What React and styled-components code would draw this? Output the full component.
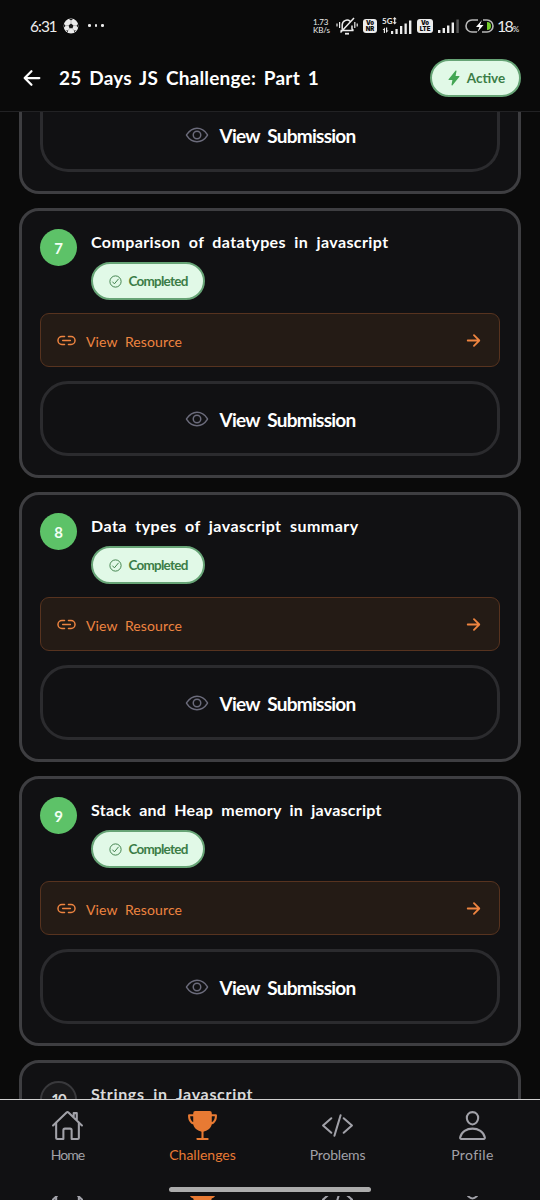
import React from "react";
import styled, { createGlobalStyle, css } from "styled-components";
import {
  IoArrowBack,
  IoArrowForward,
  IoCheckmarkCircleOutline,
  IoCodeSlashOutline,
  IoEyeOutline,
  IoFlash,
  IoHomeOutline,
  IoLinkOutline,
  IoPersonOutline,
  IoTrophy,
} from "react-icons/io5";

const GlobalStyle = createGlobalStyle`
  * {
    box-sizing: border-box;
  }

  body {
    margin: 0;
    background: #0a0a0a;
    color: #ffffff;
    font-family: Lato, "Open Sans", sans-serif;
    overflow: hidden;
  }

  svg {
    display: block;
    flex-shrink: 0;
  }
`;

const Screen = styled.div`
  width: 540px;
  height: 1200px;
  display: flex;
  flex-direction: column;
  background: #0a0a0a;
  overflow: hidden;
`;

const StatusBar = styled.div`
  height: 50px;
  flex-shrink: 0;
  display: flex;
  align-items: center;
  justify-content: space-between;
  padding: 1px 26px 0 30px;
  color: #ececec;
`;

const StatusLeft = styled.div`
  display: flex;
  align-items: center;
`;

const Clock = styled.span`
  font-size: 15.5px;
  letter-spacing: -1.5px;
  width: 33px;
  white-space: nowrap;

  b {
    font-weight: 400;
    margin: 0 0.7px 0 0.5px;
  }
`;

const Dots = styled.div`
  display: flex;
  gap: 4px;
  margin-left: 9px;

  i {
    width: 2.6px;
    height: 2.6px;
    border-radius: 50%;
    background: #ececec;
  }
`;

const StatusRight = styled.div`
  display: flex;
  align-items: center;
  gap: 5px;
`;

const Speed = styled.div`
  width: 18px;
  font-size: 8px;
  line-height: 8px;
  letter-spacing: -0.1px;
  white-space: nowrap;
`;

const VoBox = styled.div`
  width: ${(props) => props.$width}px;
  height: 14px;
  border-radius: 3px;
  background: #ececec;
  color: #0a0a0a;
  font-family: Inter, sans-serif;
  font-size: 6px;
  font-weight: 900;
  line-height: 6px;
  text-align: center;
  padding-top: 1px;
`;

const Percent = styled.span`
  width: 17px;
  margin-left: -2px;
  font-size: 16px;
  letter-spacing: -1.9px;
  white-space: nowrap;

  small {
    margin-left: 1px;
    font-size: 8px;
    letter-spacing: 0;
  }
`;

const Header = styled.header`
  height: 62px;
  flex-shrink: 0;
  display: flex;
  align-items: center;
  padding: 0 19px 6px 20px;
  border-bottom: 1px solid #222224;
`;

const HeaderTitle = styled.h1`
  flex: 1;
  margin: 1px 0 0 15px;
  font-size: 19px;
  font-weight: 700;
  line-height: 26px;
  letter-spacing: 0.2px;
  word-spacing: 3px;
  white-space: nowrap;
`;

const Pill = styled.div`
  display: flex;
  align-items: center;
  justify-content: center;
  width: ${(props) => props.$width}px;
  height: 38px;
  border: 2px solid #67a476;
  border-radius: 19px;
  background: #e1f9e7;
  color: #3b7d46;
  font-size: 13.5px;
  font-weight: 700;
  letter-spacing: ${(props) => props.$spacing || 0}px;
  gap: ${(props) => props.$gap}px;
`;

const List = styled.main`
  flex: 1;
  min-height: 0;
  overflow: hidden;
  display: flex;
  flex-direction: column;
  padding: 0 19px;
`;

const Card = styled.section`
  flex-shrink: 0;
  height: 270px;
  margin-bottom: 14px;
  padding: 18px;
  border: 3px solid #3e3e41;
  border-radius: 20px;
  background: #111113;
`;

const ScrolledCard = styled(Card)`
  height: 82px;
  padding-top: 0;
  border-top: none;
  border-radius: 0 0 20px 20px;
`;

const CardTop = styled.div`
  display: flex;
  height: 84px;
  gap: 14px;
`;

const NumberCircle = styled.div`
  width: 37px;
  height: 37px;
  flex-shrink: 0;
  border-radius: 50%;
  display: flex;
  align-items: center;
  justify-content: center;
  background: #5dc268;
  color: #f2fff4;
  font-size: 15px;
  font-weight: 700;

  ${(props) =>
    props.$pending &&
    css`
      background: #1a1a1c;
      border: 2px solid #39393c;
      color: #d8d8d8;
      letter-spacing: -2px;
      padding: 0 1px 2px 0;
    `}
`;

const CardTitle = styled.h2`
  margin: 0 0 8px;
  font-size: 16px;
  font-weight: 700;
  line-height: 25px;
  word-spacing: 4px;
  letter-spacing: ${(props) => props.$spacing || 0}px;
  white-space: nowrap;
  color: ${(props) => (props.$pending ? "#dadada" : "#ffffff")};
`;

const Resource = styled.div`
  height: 54px;
  display: flex;
  align-items: center;
  padding: 0 16px 0 15px;
  border: 1px solid #57331f;
  border-radius: 9px;
  background: #241b15;
  color: #ee8440;

  span {
    flex: 1;
    margin: 3px 0 0 9px;
    font-size: 14px;
    letter-spacing: 0.1px;
    word-spacing: 4px;
  }
`;

const Submission = styled.div`
  height: 75px;
  margin-top: 14px;
  display: flex;
  align-items: center;
  justify-content: center;
  gap: 11px;
  border: 3px solid #2b2b2e;
  border-radius: 28px;
  font-size: 19px;
  font-weight: 700;
  letter-spacing: -0.75px;
  word-spacing: 4px;

  svg {
    color: #6b6b7b;
  }

  span {
    margin-top: 2px;
  }
`;

const ScrolledSubmission = styled(Submission)`
  height: 60px;
  margin-top: 0;
  padding-bottom: 12px;
  border-top: none;
  border-radius: 0 0 28px 28px;
`;

const TabBar = styled.nav`
  height: 101px;
  flex-shrink: 0;
  border-top: 1px solid #d0d0d0;
  background: #111113;
`;

const Tabs = styled.div`
  display: grid;
  grid-template-columns: repeat(4, 1fr);
`;

const Tab = styled.div`
  display: flex;
  flex-direction: column;
  align-items: center;
  padding-top: 9px;
  color: ${(props) => (props.$active ? "#e87a33" : "#a1a1a8")};
`;

const TabLabel = styled.span`
  margin-top: 3px;
  font-size: 14px;
  line-height: 20px;
  letter-spacing: ${(props) => props.$spacing}px;
`;

const Handle = styled.div`
  width: 202px;
  height: 5px;
  margin: 22px auto 4px;
  border-radius: 3px;
  background: #acacac;
`;

// only a thin strip of the next tab row is visible under the handle
const Strip = styled.div`
  height: 5px;
  overflow: hidden;

  ${Tabs} {
    margin-top: -22px;
  }
`;

const challenges = [
  { id: 7, title: "Comparison of datatypes in javascript", spacing: 0.4 },
  { id: 8, title: "Data types of javascript summary", spacing: 0.47 },
  { id: 9, title: "Stack and Heap memory in javascript", spacing: 0.25 },
  { id: 10, title: "Strings in Javascript", spacing: 0.68, pending: true },
];

const tabs = [
  { name: "Home", Icon: IoHomeOutline, spacing: -1 },
  { name: "Challenges", Icon: IoTrophy, active: true, spacing: 0 },
  { name: "Problems", Icon: IoCodeSlashOutline, spacing: -0.2 },
  { name: "Profile", Icon: IoPersonOutline, spacing: 0.4 },
];

const Football = () => (
  <svg width="16" height="16" viewBox="0 0 16 16">
    <circle cx="8" cy="8" r="7.4" fill="#ececec" />
    <path
      d="M8 5.6l2.5 1.8-1 2.9H6.5l-1-2.9zM6 1h4L8 2.5zM15 6l0 3.6-1.6-1.8zM1 6l0 3.6 1.6-1.8zM10.9 12.6l2.1-.4-1.9 2.1zM5.1 12.6l-2.1-.4 1.9 2.1z"
      fill="#1c1c1c"
    />
    <path
      d="M8 2.5v3.1M10.5 7.4l2.9.4M9.5 10.3l1.4 2.3M6.5 10.3l-1.4 2.3M5.5 7.4l-2.9.4"
      stroke="#888"
      strokeWidth="0.5"
    />
  </svg>
);

const BellOff = () => (
  <svg width="22" height="18" viewBox="0 0 22 18" fill="none" stroke="#ececec" strokeWidth="1.5">
    <path d="M4.5 13.5h13M6.2 12.5V8a4.8 4.8 0 0 1 8-3.6M16 8.5V12l1.5 1.5M18 1L4.5 15.5" />
    <path d="M9 16.7h4" strokeWidth="1.8" />
    <path d="M3.6 5v6M1 6.5v3M18.8 5v6M21.2 6.5v3" strokeWidth="1.2" />
  </svg>
);

const SignalFiveG = () => (
  <svg width="30" height="18" viewBox="0 0 30 18" fill="#ececec">
    <text x="0" y="7" fontSize="8" fontWeight="700" fontFamily="Lato">
      5G
    </text>
    <path d="M12.7 0l2 2.2h-1.4v3h1.4l-2 2.3-2-2.3h1.4v-3h-1.4z" />
    <path d="M.5 13L3 10.5V16H1.8v-3zM6.5 13.5L4 16v-5.5h1.2v3z" />
    <path d="M9 14h2.2v3H9zM13.4 12h2.3v5h-2.3zM18 9h2.3v8H18zM22.5 6.5h2.3V17h-2.3zM27 3.5h2.4V17H27z" />
  </svg>
);

const Signal = () => (
  <svg width="22" height="14" viewBox="0 0 22 14" fill="#ececec">
    <path d="M0 11h2.4v3H0zM4.6 9H7v5H4.6zM9 6.5h2.4V14H9zM13.6 3.5H16V14h-2.4z" />
    <path d="M18.4 0.5h2.4V14h-2.4z" fill="#555" />
  </svg>
);

const Battery = () => (
  <svg width="29" height="14" viewBox="0 0 29 14">
    <path
      d="M13 1H7a6 6 0 0 0 0 12h5M18 1h4a6 6 0 0 1 0 12h-5"
      fill="none"
      stroke="#b8b8b8"
      strokeWidth="1.6"
    />
    <path d="M22 3a4 4 0 0 1 0 8z" fill="#76d02c" />
    <path d="M17 1l-6 7h3.4L12.5 13l6-7h-3.6z" fill="#fff" />
  </svg>
);

const ChallengeCard = ({ id, title, spacing, pending }) => (
  <Card>
    <CardTop>
      <NumberCircle $pending={pending}>{id}</NumberCircle>
      <div>
        <CardTitle $spacing={spacing} $pending={pending}>
          {title}
        </CardTitle>
        {!pending && (
          <Pill $width={114} $gap={5} $spacing={-0.75}>
            <IoCheckmarkCircleOutline size={15} />
            Completed
          </Pill>
        )}
      </div>
    </CardTop>
    {!pending && (
      <>
        <Resource>
          <IoLinkOutline size={21} />
          <span>View Resource</span>
          <IoArrowForward size={19} />
        </Resource>
        <Submission>
          <IoEyeOutline size={24} />
          <span>View Submission</span>
        </Submission>
      </>
    )}
  </Card>
);

const App = () => {
  return (
    <>
      <GlobalStyle />
      <Screen>
        <StatusBar>
          <StatusLeft>
            <Clock>
              6<b>:</b>31
            </Clock>
            <Football />
            <Dots>
              <i />
              <i />
              <i />
            </Dots>
          </StatusLeft>
          <StatusRight>
            <Speed>
              1.73
              <br />
              KB/s
            </Speed>
            <BellOff />
            <VoBox $width={14}>
              Vo
              <br />
              NR
            </VoBox>
            <SignalFiveG />
            <VoBox $width={16}>
              Vo
              <br />
              LTE
            </VoBox>
            <Signal />
            <Battery />
            <Percent>
              18<small>%</small>
            </Percent>
          </StatusRight>
        </StatusBar>
        <Header>
          <IoArrowBack size={24} />
          <HeaderTitle>25 Days JS Challenge: Part 1</HeaderTitle>
          <Pill $width={91} $gap={5}>
            <IoFlash size={16} color="#43a654" />
            Active
          </Pill>
        </Header>
        <List>
          <ScrolledCard>
            <ScrolledSubmission>
              <IoEyeOutline size={24} />
              <span>View Submission</span>
            </ScrolledSubmission>
          </ScrolledCard>
          {challenges.map((challenge) => (
            <ChallengeCard key={challenge.id} {...challenge} />
          ))}
        </List>
        <TabBar>
          <Tabs>
            {tabs.map(({ name, Icon, active, spacing }) => (
              <Tab key={name} $active={active}>
                <Icon size={33} />
                <TabLabel $spacing={spacing}>{name}</TabLabel>
              </Tab>
            ))}
          </Tabs>
          <Handle />
          <Strip>
            <Tabs>
              {tabs.map(({ name, Icon, active }) => (
                <Tab key={name} $active={active}>
                  <Icon size={33} />
                </Tab>
              ))}
            </Tabs>
          </Strip>
        </TabBar>
      </Screen>
    </>
  );
};

export default App;
